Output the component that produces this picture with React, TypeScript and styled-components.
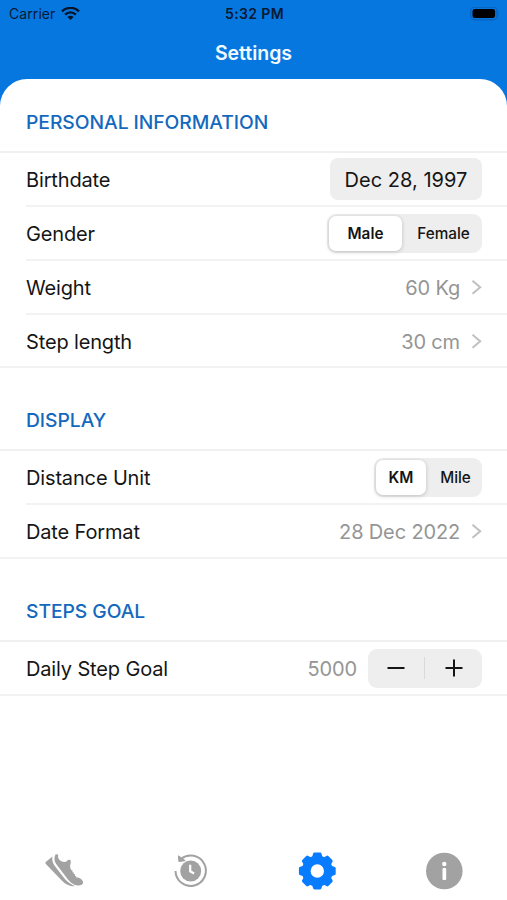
import React, { useState } from "react";
import styled, { createGlobalStyle } from "styled-components";

const Global = createGlobalStyle`
  * { box-sizing: border-box; }
  body { margin: 0; background: #fff; font-family: Inter, "Liberation Sans", sans-serif; }
  button { font: inherit; color: inherit; border: 0; background: none; padding: 0; margin: 0; cursor: pointer; }
`;

const Screen = styled.div`
  width: 507px;
  height: 900px;
  display: flex;
  flex-direction: column;
  background: linear-gradient(#0777e0 0 140px, #fff 140px);
  overflow: hidden;
`;

const StatusBar = styled.div`
  height: 27px;
  flex: none;
  display: grid;
  grid-template-columns: 1fr auto 1fr;
  align-items: center;
  padding: 0 7px 0 9px;
  color: #061a33;
  font-size: 14px;
  line-height: 20px;
`;

const Carrier = styled.div`
  display: flex;
  align-items: center;
  gap: 6px;
  letter-spacing: 0.08px;
`;

const Clock = styled.div`
  font-weight: 600;
  font-size: 14px;
  letter-spacing: 0.35px;
`;

const BatterySlot = styled.div`
  display: flex;
  justify-content: flex-end;
`;

const TitleBar = styled.h1`
  height: 52px;
  flex: none;
  margin: 0;
  display: flex;
  align-items: center;
  justify-content: center;
  color: #f1faff;
  font-size: 19.5px;
  font-weight: 600;
  letter-spacing: -0.03px;
`;

const Sheet = styled.main`
  flex: 1;
  background: #fff;
  border-radius: 27px 27px 0 0;
`;

const SectionTitle = styled.h2<{ $height: number }>`
  height: ${(p) => p.$height}px;
  margin: 0;
  padding: 0 0 17px 26px;
  display: flex;
  align-items: flex-end;
  border-bottom: 2px solid #f0f0f0;
  color: #1469be;
  font-size: 19.3px;
  line-height: 24px;
  font-weight: 500;
  letter-spacing: -0.05px;
`;

const Row = styled.div<{ $last?: boolean; $height?: number }>`
  height: ${(p) => p.$height ?? 54}px;
  margin-left: ${(p) => (p.$last ? 0 : 26)}px;
  padding: 0 25px 0 ${(p) => (p.$last ? 26 : 0)}px;
  display: flex;
  align-items: center;
  justify-content: space-between;
  border-bottom: 2px solid #f2f2f2;
`;

const Label = styled.span`
  padding-top: 2px;
  color: #151515;
  font-size: 20px;
  line-height: 24px;
  letter-spacing: -0.15px;
`;

const Value = styled(Label)`
  color: #959595;
`;

const Trailing = styled.button`
  display: flex;
  align-items: center;
  gap: 11px;
`;

const DatePill = styled.button`
  width: 152px;
  height: 42px;
  padding-top: 1px;
  border-radius: 8px;
  background: #eee;
  color: #151515;
  font-size: 20px;
  letter-spacing: 0.02px;
`;

const Segmented = styled.div<{ $columns: string }>`
  height: 39px;
  padding: 2px;
  display: grid;
  grid-template-columns: ${(p) => p.$columns};
  border-radius: 9px;
  background: #eee;
`;

const Segment = styled.button<{ $active: boolean }>`
  padding-left: ${(p) => (p.$active ? 0 : 5)}px;
  border-radius: 7px;
  color: #151515;
  font-size: 15.3px;
  font-weight: ${(p) => (p.$active ? 600 : 500)};
  background: ${(p) => (p.$active ? "#fff" : "transparent")};
  box-shadow: ${(p) => (p.$active ? "0 1px 4px rgba(0, 0, 0, 0.2)" : "none")};
`;

const Goal = styled.div`
  display: flex;
  align-items: center;
  gap: 11px;
`;

const Stepper = styled.div`
  width: 114px;
  height: 39px;
  display: grid;
  grid-template-columns: 56px 1px 1fr;
  align-items: center;
  border-radius: 9px;
  background: #eee;
`;

const StepButton = styled.button`
  display: grid;
  place-items: center;
  height: 100%;
`;

const StepDivider = styled.span`
  height: 22px;
  background: #dadada;
`;

const TabBar = styled.nav`
  height: 58px;
  flex: none;
  display: grid;
  grid-template-columns: repeat(4, 1fr);
  background: #fff;
`;

const Tab = styled.button<{ $active?: boolean }>`
  display: flex;
  justify-content: center;
  align-items: center;
  color: ${(p) => (p.$active ? "#087cff" : "#a2a2a2")};
`;

const WifiIcon = () => (
  <svg width="19" height="14" viewBox="0 0 19 14" fill="none" stroke="#061428">
    <path d="M1 4.4C5.8-.3 13.2-.3 18 4.4" strokeWidth="2.4" />
    <path d="M4.1 7.6c3.1-3 7.7-3 10.8 0" strokeWidth="2.3" />
    <path d="M9.5 13.1 6.4 9.9c1.7-1.6 4.5-1.6 6.2 0Z" fill="#061428" stroke="none" />
  </svg>
);

const BatteryIcon = () => (
  <svg width="30" height="14" viewBox="0 0 30 14">
    <rect x="0.7" y="0.2" width="26.4" height="12.6" rx="4" fill="none" stroke="#0763bb" strokeWidth="1.3" />
    <rect x="2.5" y="1.9" width="22.6" height="9.2" rx="2.3" fill="#000" />
    <path d="M28.2 4.3q1.7 2.2 0 4.4Z" fill="#0763bb" />
  </svg>
);

const Chevron = () => (
  <svg width="11" height="16" viewBox="0 0 11 16" fill="none" stroke="#c0c0c0" strokeWidth="2">
    <path d="m1.5 1.8 7.7 6.5-7.7 6.5" />
  </svg>
);

const Minus = () => (
  <svg width="18" height="18" viewBox="0 0 18 18" stroke="#151515" strokeWidth="2">
    <path d="M.5 9h17" />
  </svg>
);

const Plus = () => (
  <svg width="18" height="18" viewBox="0 0 18 18" stroke="#151515" strokeWidth="2">
    <path d="M.5 9h17M9 .5v17" />
  </svg>
);

const ShoeIcon = () => (
  <svg width="40" height="40" viewBox="0 0 40 40" fill="currentColor">
    <path d="M9.4 5.6 3 10.800C2.200 11.500 2.300 12.300 2.900 13L18.500 29.300C22.500 33.500 26.500 35.400 32 35.300C26.600 32.700 23.500 30 20.500 26.200L12 15.300C9.800 12.300 8.800 9.300 9.400 5.600Z" />
    <path d="M12.500 3.500C10.600 7.300 11.400 10.600 13.900 13.900L22.300 24.900C26.300 30.400 29.700 34 35.200 34.500C38.600 34.600 40.200 33 40.100 31.200C39.900 29.200 38 27.700 35 26.500L33.200 26.500 33.400 25.200 31.900 25 32.200 23.300 30.700 23.100 30.800 21.600 29.400 21.200 29.600 19.600 28.100 19C26.900 16.700 26.900 14.800 27.600 12.200C28 10.200 27.800 9.300 26.800 8.800C25.400 8.300 24.300 9.100 23.600 10.600C20.500 11.500 17.800 10.600 16.200 8.600C15 7.100 14.900 5.800 15.200 4C14.900 3 13.500 2.900 12.500 3.500Z" />
  </svg>
);

const HistoryIcon = () => (
  <svg width="40" height="40" viewBox="0 0 40 40" fill="none">
    <path d="M5.500 20A15.200 15.200 0 1 0 11 8" stroke="currentColor" strokeWidth="2" />
    <path d="m8.400 4.800.5 5.700 6.300-.8Z" fill="currentColor" stroke="currentColor" strokeWidth="1" />
    <circle cx="20.700" cy="20" r="10.500" fill="currentColor" />
    <path d="M20.200 13.700v6.600l3.900 2.200" stroke="#fff" strokeWidth="2.200" />
  </svg>
);

const teeth = [0, 45, 90, 135, 180, 225, 270, 315];

const GearIcon = () => (
  <svg width="40" height="40" viewBox="0 0 40 40" fill="currentColor">
    {teeth.map((angle) => (
      <path
        key={angle}
        d="m14.600 8 1.400-5Q16.300 1.600 17.500 1.600h5.600q1.200 0 1.500 1.400l1.400 5Z"
        transform={`rotate(${angle} 20.300 20)`}
      />
    ))}
    <circle cx="20.300" cy="20" r="11.100" fill="none" stroke="currentColor" strokeWidth="8.800" />
  </svg>
);

const InfoIcon = () => (
  <svg width="40" height="40" viewBox="0 0 40 40">
    <circle cx="20.300" cy="20" r="18.300" fill="currentColor" />
    <circle cx="20.300" cy="13" r="2.200" fill="#fff" />
    <rect x="18.500" y="17" width="3.700" height="12" rx="0.900" fill="#fff" />
  </svg>
);

type ChoiceProps = { options: string[]; columns: string };

const Choice = ({ options, columns }: ChoiceProps) => {
  const [selected, setSelected] = useState(options[0]);
  return (
    <Segmented $columns={columns}>
      {options.map((option) => (
        <Segment key={option} $active={option === selected} onClick={() => setSelected(option)}>
          {option}
        </Segment>
      ))}
    </Segmented>
  );
};

export default function App() {
  const [goal, setGoal] = useState(5000);
  return (
    <>
      <Global />
      <Screen>
        <StatusBar>
          <Carrier>Carrier <WifiIcon /></Carrier>
          <Clock>5:32 PM</Clock>
          <BatterySlot><BatteryIcon /></BatterySlot>
        </StatusBar>
        <TitleBar>Settings</TitleBar>
        <Sheet>
          <SectionTitle $height={74}>PERSONAL INFORMATION</SectionTitle>
          <Row>
            <Label>Birthdate</Label>
            <DatePill>Dec 28, 1997</DatePill>
          </Row>
          <Row>
            <Label>Gender</Label>
            <Choice options={["Male", "Female"]} columns="73px 78px" />
          </Row>
          <Row>
            <Label>Weight</Label>
            <Trailing><Value>60 Kg</Value><Chevron /></Trailing>
          </Row>
          <Row $last $height={53}>
            <Label>Step length</Label>
            <Trailing><Value>30 cm</Value><Chevron /></Trailing>
          </Row>
          <SectionTitle $height={83}>DISPLAY</SectionTitle>
          <Row>
            <Label>Distance Unit</Label>
            <Choice options={["KM", "Mile"]} columns="50px 54px" />
          </Row>
          <Row $last>
            <Label>Date Format</Label>
            <Trailing><Value>28 Dec 2022</Value><Chevron /></Trailing>
          </Row>
          <SectionTitle $height={83}>STEPS GOAL</SectionTitle>
          <Row $last>
            <Label>Daily Step Goal</Label>
            <Goal>
              <Value>{goal}</Value>
              <Stepper>
                <StepButton aria-label="Decrease" onClick={() => setGoal(goal - 500)}><Minus /></StepButton>
                <StepDivider />
                <StepButton aria-label="Increase" onClick={() => setGoal(goal + 500)}><Plus /></StepButton>
              </Stepper>
            </Goal>
          </Row>
        </Sheet>
        <TabBar>
          <Tab aria-label="Steps"><ShoeIcon /></Tab>
          <Tab aria-label="History"><HistoryIcon /></Tab>
          <Tab aria-label="Settings" $active><GearIcon /></Tab>
          <Tab aria-label="About"><InfoIcon /></Tab>
        </TabBar>
      </Screen>
    </>
  );
}
